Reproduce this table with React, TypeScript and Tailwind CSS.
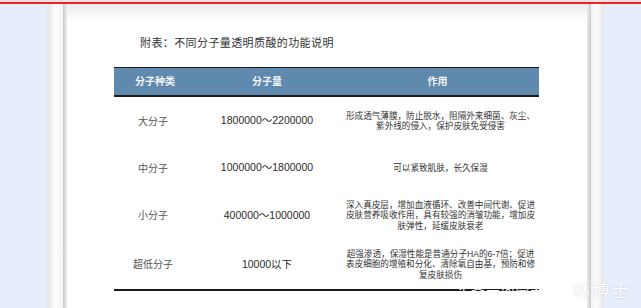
const rows = [
  {
    name: '大分子',
    weight: '1800000～2200000',
    lines: ['形成透气薄膜，防止脱水，阻隔外来细菌、灰尘、', '紫外线的侵入，保护皮肤免受侵害'],
    h: 'h-[48px]',
  },
  {
    name: '中分子',
    weight: '1000000～1800000',
    lines: ['可以紧致肌肤，长久保湿'],
    h: 'h-[46px]',
  },
  {
    name: '小分子',
    weight: '400000～1000000',
    lines: ['深入真皮层，增加血液循环、改善中间代谢、促进', '皮肤营养吸收作用，具有较强的消皱功能，增加皮', '肤弹性，延缓皮肤衰老'],
    h: 'h-[49px]',
  },
  {
    name: '超低分子',
    weight: '10000以下',
    lines: ['超强渗透，保湿性能是普通分子HA的6-7倍；促进', '表皮细胞的增殖和分化、清除氧自由基，预防和修', '复皮肤损伤'],
    h: 'h-[49px]',
  },
];

const font = "font-['Liberation_Sans','Noto_Sans_CJK_SC',sans-serif]";

export default function App() {
  return (
    <div className={`relative w-[641px] h-[308px] overflow-hidden flex flex-col bg-[#e6effa] ${font}`}>
      <div className="h-[2px] bg-[#f7dede]" />
      <div className="h-[2px] bg-[#e3262b]" />
      <div className="flex-1 flex">
        <div className="w-[47px] bg-[#e5eefa]" />
        <div className="w-[16px] bg-gradient-to-r from-[#e1e3e6] via-[#fbfbfb] to-[#f4f4f4]" />
        <div className="w-[4px] bg-gradient-to-r from-[#c9c9c9] to-[#eeeeee]" />

        <div className="flex-1 flex flex-col pt-[31px] pl-[47px] bg-gradient-to-b from-[#ececec] via-white via-[6%] to-white">
          <p className="ml-[26px] h-[16px] leading-[16px] text-[11px] tracking-[0.4px] text-[#333]">
            附表：不同分子量透明质酸的功能说明
          </p>

          <div className="mt-[16px] w-[425px]">
            <div className="grid grid-cols-[78px_150px_197px] h-[30px] items-center bg-[#6089ae] border-t-[1.5px] border-b-[2px] border-[#1c1c1c] text-[10px] font-bold text-[#f2f4f7]">
              <span className="text-center pl-[4px]">分子种类</span>
              <span className="text-center">分子量</span>
              <span className="text-center pr-[6px]">作用</span>
            </div>
            {rows.map((r) => (
              <div key={r.name} className={`grid grid-cols-[78px_150px_197px] items-center ${r.h}`}>
                <span className="text-center text-[10px] text-[#555]">{r.name}</span>
                <span className="text-center text-[10.5px] text-[#2a2a2a]">{r.weight}</span>
                <span className="text-center text-[8.6px] leading-[10.5px] text-[#333] whitespace-nowrap">
                  {r.lines.map((l, i) => (
                    <span key={i} className="block">{l}</span>
                  ))}
                </span>
              </div>
            ))}
            <div className="h-[2px] bg-[#1a1a1a]" />
          </div>
        </div>

        <div className="w-[4px] bg-gradient-to-r from-[#eeeeee] to-[#c9c9c9]" />
        <div className="w-[13px] bg-gradient-to-r from-[#f4f4f4] via-[#fbfbfb] to-[#e4e6ea]" />
        <div className="w-[37px] bg-[#e5eefa]" />
      </div>

      {/* watermark */}
      <span className="absolute left-[456px] top-[281px] text-[14px] leading-[18px] text-white whitespace-nowrap tracking-[1px] [font-family:'Noto_Sans_CJK_SC',sans-serif]">
        头条号@营养师
      </span>
      <span className="absolute left-[573px] top-[279px] text-[17px] leading-[22px] text-white whitespace-nowrap tracking-[2.5px] [text-shadow:0_0_2px_rgba(120,130,140,0.35)] [font-family:'Noto_Sans_CJK_SC',sans-serif]">
        林博士
      </span>
    </div>
  );
}
